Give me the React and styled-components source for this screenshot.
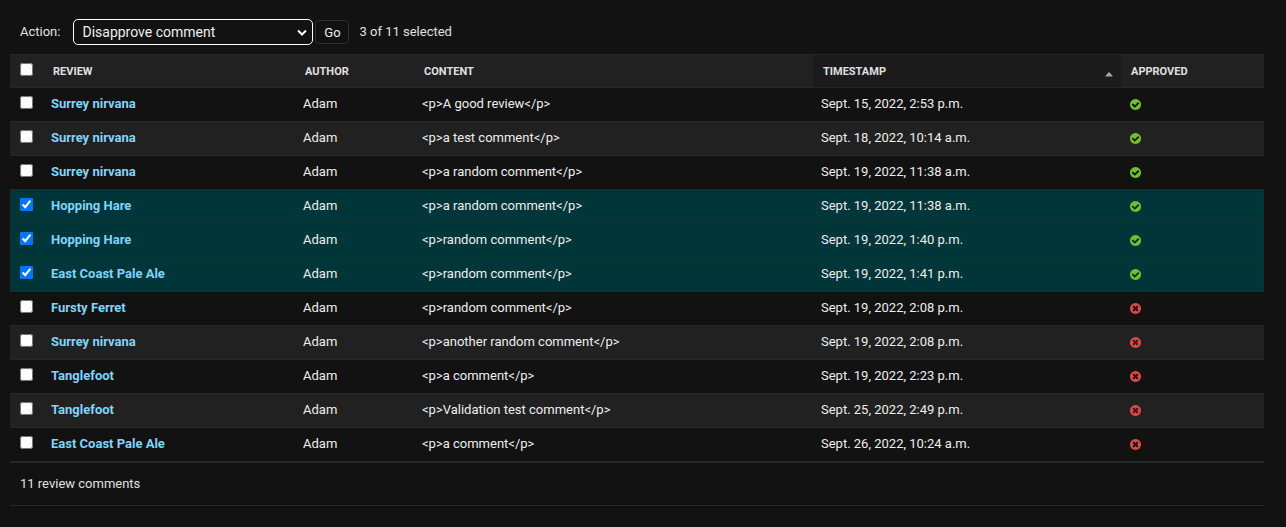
import React, { useState } from "react";
import styled, { createGlobalStyle } from "styled-components";

const Global = createGlobalStyle`
  html { color-scheme: light; }
  body {
    margin: 0;
    background: #121212;
    color: #eeeeee;
    font: 13px/19px Roboto, "Liberation Sans", sans-serif;
  }
`;

const ChangeList = styled.main`
  padding: 19px 22px 0 10px;
`;

const Actions = styled.div`
  display: flex;
  height: 35px;
  padding-left: 10px;
  color: #e0e0e0;
`;

const ActionLabel = styled.label`
  display: flex;
  line-height: 25px;
  gap: 13px;
`;

const SelectBox = styled.span`
  display: grid;
  position: relative;
  height: 26px;
`;

const Select = styled.select`
  box-sizing: border-box;
  appearance: none;
  width: 240px;
  height: 26px;
  padding: 0 0 0 8px;
  border: 1px solid #fff;
  border-radius: 5px;
  outline: none;
  background: #121212;
  color: #eeeeee;
  font: 14px Roboto, "Liberation Sans", sans-serif;
`;

const Chevron = styled.svg`
  position: absolute;
  top: 10px;
  right: 6px;
  width: 10px;
  height: 8px;
  pointer-events: none;
`;

const GoButton = styled.button`
  box-sizing: border-box;
  width: 34px;
  height: 24px;
  margin: 1px 10px 0 2px;
  padding: 1px 0 0;
  border: 1px solid #2f2f2f;
  border-radius: 4px;
  background: #121212;
  color: #eeeeee;
  font: 13px/20px Roboto, "Liberation Sans", sans-serif;
`;

const Counter = styled.span`
  line-height: 25px;
`;

const Table = styled.table`
  width: 1254px;
  table-layout: fixed;
  border-collapse: separate;
  border-spacing: 0;
`;

const Column = styled.col`
  width: ${(p) => p.$width}px;
`;

const HeadCell = styled.th`
  box-sizing: border-box;
  height: 34px;
  padding: ${(p) => (p.$check ? "0 10px" : "2px 10px 0")};
  border: solid #272727;
  border-width: 1px 0;
  background: ${(p) => (p.$sorted ? "#1b1b1b" : "#212121")};
  color: #e0e0e0;
  font-size: 11px;
  line-height: 14px;
  font-weight: 700;
  text-align: left;
  text-transform: uppercase;
`;

const HeadContent = styled.div`
  display: flex;
  align-items: center;
  justify-content: space-between;
`;

const SortArrow = styled.svg`
  display: block;
  width: 8px;
  height: 5px;
  margin: 4px -2px 0 0;
`;

const Row = styled.tr`
  background: ${(p) => (p.$selected ? "#00363a" : p.$striped ? "#212121" : "#121212")};
`;

const Cell = styled.td`
  box-sizing: border-box;
  height: 34px;
  padding: ${(p) => (p.$check ? "8px 10px" : "6px 8px 8px")};
  border-bottom: 1px solid #272727;
  vertical-align: top;
  white-space: nowrap;
`;

const Check = styled.input`
  display: block;
  width: 13px;
  height: 13px;
  margin: ${(p) => (p.$head ? "-3px 0 0" : "0")};
`;

const Link = styled.a`
  color: #81d4fa;
  font-weight: 700;
  text-decoration: none;
`;

const Status = styled.svg`
  display: block;
  width: 13px;
  height: 13px;
  margin-top: 4px;
`;

const Paginator = styled.p`
  box-sizing: border-box;
  height: 44px;
  margin: 0;
  padding: 11px 10px;
  border: solid #272727;
  border-width: 1px 0;
  color: #e0e0e0;
`;

const DISC =
  "q0 209-103 385.5t-279.5 279.5-385.5 103-385.5-103-279.5-279.5-103-385.5 103-385.5 279.5-279.5 385.5-103 385.5 103 279.5 279.5 103 385.5z";
const YES =
  "M1412 734q0-28-18-46l-91-90q-19-19-45-19t-45 19l-408 407-226-226q-19-19-45-19t-45 19l-91 90q-18 18-18 46 0 27 18 45l362 362q19 19 45 19 27 0 46-19l543-543q18-18 18-45zm252 162" + DISC;
const NO =
  "M1277 1122q0-26-19-45l-181-181 181-181q19-19 19-45 0-27-19-46l-90-90q-19-19-46-19-26 0-45 19l-181 181-181-181q-19-19-45-19-27 0-46 19l-90 90q-19 19-19 46 0 26 19 45l181 181-181 181q-19 19-19 45 0 27 19 46l90 90q19 19 46 19 26 0 45-19l181-181 181 181q19 19 45 19 27 0 46-19l90-90q19-19 19-46zm387-226" + DISC;

function BooleanIcon({ value }) {
  return (
    <Status viewBox="0 0 1792 1792" role="img">
      <path fill={value ? "#70bf2b" : "#dd4646"} d={value ? YES : NO} />
    </Status>
  );
}

const WIDTHS = [33, 252, 119, 399, 308, 143];

const COMMENTS = [
  ["Surrey nirvana", "<p>A good review</p>", "Sept. 15, 2022, 2:53 p.m.", true],
  ["Surrey nirvana", "<p>a test comment</p>", "Sept. 18, 2022, 10:14 a.m.", true],
  ["Surrey nirvana", "<p>a random comment</p>", "Sept. 19, 2022, 11:38 a.m.", true],
  ["Hopping Hare", "<p>a random comment</p>", "Sept. 19, 2022, 11:38 a.m.", true],
  ["Hopping Hare", "<p>random comment</p>", "Sept. 19, 2022, 1:40 p.m.", true],
  ["East Coast Pale Ale", "<p>random comment</p>", "Sept. 19, 2022, 1:41 p.m.", true],
  ["Fursty Ferret", "<p>random comment</p>", "Sept. 19, 2022, 2:08 p.m.", false],
  ["Surrey nirvana", "<p>another random comment</p>", "Sept. 19, 2022, 2:08 p.m.", false],
  ["Tanglefoot", "<p>a comment</p>", "Sept. 19, 2022, 2:23 p.m.", false],
  ["Tanglefoot", "<p>Validation test comment</p>", "Sept. 25, 2022, 2:49 p.m.", false],
  ["East Coast Pale Ale", "<p>a comment</p>", "Sept. 26, 2022, 10:24 a.m.", false],
];

export default function App() {
  const [selected, setSelected] = useState([3, 4, 5]);
  const toggle = (i) =>
    setSelected((s) => (s.includes(i) ? s.filter((n) => n !== i) : [...s, i]));
  const all = selected.length === COMMENTS.length;

  return (
    <>
      <Global />
      <ChangeList>
        <Actions>
          <ActionLabel>
            Action:
            <SelectBox>
              <Select defaultValue="disapprove">
                <option value="disapprove">Disapprove comment</option>
              </Select>
              <Chevron viewBox="0 0 10 8">
                <path d="M1 1.5 5 5.5 9 1.5" fill="none" stroke="#fff" strokeWidth="2" />
              </Chevron>
            </SelectBox>
          </ActionLabel>
          <GoButton>Go</GoButton>
          <Counter>{`${selected.length} of ${COMMENTS.length} selected`}</Counter>
        </Actions>
        <Table>
          <colgroup>
            {WIDTHS.map((w, i) => <Column key={i} $width={w} />)}
          </colgroup>
          <thead>
            <tr>
              <HeadCell $check>
                <Check
                  $head
                  type="checkbox"
                  checked={all}
                  onChange={() => setSelected(all ? [] : COMMENTS.map((_, i) => i))}
                />
              </HeadCell>
              <HeadCell>Review</HeadCell>
              <HeadCell>Author</HeadCell>
              <HeadCell>Content</HeadCell>
              <HeadCell $sorted>
                <HeadContent>
                  Timestamp
                  <SortArrow viewBox="0 0 8 5">
                    <path d="M0 4.6 3.6 0.2h0.8L8 4.6z" fill="#a5a5a5" />
                  </SortArrow>
                </HeadContent>
              </HeadCell>
              <HeadCell>Approved</HeadCell>
            </tr>
          </thead>
          <tbody>
            {COMMENTS.map(([review, content, time, approved], i) => {
              const on = selected.includes(i);
              return (
                <Row key={i} $selected={on} $striped={i % 2 === 1}>
                  <Cell $check>
                    <Check type="checkbox" checked={on} onChange={() => toggle(i)} />
                  </Cell>
                  <Cell><Link href="#">{review}</Link></Cell>
                  <Cell>Adam</Cell>
                  <Cell>{content}</Cell>
                  <Cell>{time}</Cell>
                  <Cell><BooleanIcon value={approved} /></Cell>
                </Row>
              );
            })}
          </tbody>
        </Table>
        <Paginator>11 review comments</Paginator>
      </ChangeList>
    </>
  );
}
